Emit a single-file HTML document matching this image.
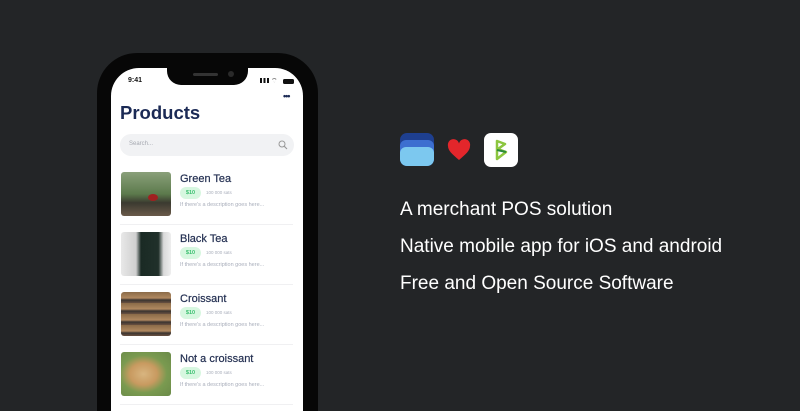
<!DOCTYPE html>
<html><head><style>
*{margin:0;padding:0;box-sizing:border-box}
html,body{width:800px;height:411px;overflow:hidden}
body{background:#232527;position:relative;font-family:"Liberation Sans",sans-serif}
.phone{position:absolute;left:97px;top:53px;width:221px;height:358px;background:#070707;border-radius:40px 40px 0 0}
.screen{position:absolute;left:111px;top:68px;width:192px;height:343px;background:#fff;border-radius:28px 28px 0 0;overflow:hidden}
.notch{position:absolute;left:167px;top:66px;width:81px;height:19px;background:#070707;border-radius:0 0 14px 14px}
.abs{position:absolute}
.title{left:120px;top:102px;font-size:18.5px;font-weight:bold;color:#1b2a55}
.search{left:120px;top:134px;width:174px;height:22px;background:#f1f2f4;border-radius:11px}
.row .img{position:absolute;left:121px;width:50px;height:44px;border-radius:3px}
.name{position:absolute;left:180px;font-size:11px;color:#243052;-webkit-text-stroke:0.2px #243052}
.pill{position:absolute;left:180px;width:21px;height:12px;background:#d7f7e0;border-radius:6px;color:#3cbf70;font-size:5.5px;font-weight:bold;text-align:center;line-height:12px}
.sats{position:absolute;left:206px;font-size:4.5px;color:#a9aebb}
.desc{position:absolute;left:180px;font-size:5.5px;color:#a9aebb}
.div{position:absolute;left:120px;width:173px;height:1px;background:#f0f0f2}
.txt{position:absolute;left:400px;color:#fff;font-size:19px}
</style></head><body>
<div class="phone"></div>
<div class="screen"></div>
<div class="notch"></div>
<div class="abs" style="left:193px;top:73px;width:25px;height:3px;background:#333;border-radius:2px"></div>
<div class="abs" style="left:228px;top:71px;width:6px;height:6px;background:#2a2a2a;border-radius:50%"></div>
<div class="abs" style="left:128px;top:77px;font-size:7px;font-weight:bold;color:#111">9:41</div>
<div class="abs" style="left:260px;top:78px;width:9px;height:5px;background:linear-gradient(90deg,#111 20%,transparent 20%,transparent 40%,#111 40%,#111 60%,transparent 60%,transparent 80%,#111 80%)"></div>
<div class="abs" style="left:271px;top:77px;font-size:7px;color:#111">⌔</div>
<div class="abs" style="left:283px;top:79px;width:11px;height:5px;background:#111;border-radius:1.5px"></div>
<div class="abs" style="left:283px;top:91px;font-size:9px;color:#1b2a55;letter-spacing:-1px;font-weight:bold">•••</div>
<div class="abs title">Products</div>
<div class="abs search"></div>
<div class="abs" style="left:129px;top:141px;font-size:6px;color:#a5a8b0">Search...</div>
<svg class="abs" style="left:278px;top:140px" width="10" height="10" viewBox="0 0 10 10"><circle cx="4" cy="4" r="3" fill="none" stroke="#999" stroke-width="1"/><path d="M6.2 6.2L9 9" stroke="#999" stroke-width="1.1"/></svg>

<div class="row">
<div class="img" style="top:172px;background:linear-gradient(180deg,#8aa07a 0%,#5c7a4c 50%,#3b3a30 70%,#6a5a4a 100%)"></div>
<div class="abs" style="left:148px;top:194px;width:10px;height:7px;background:#a02020;border-radius:50%"></div>
<div class="name" style="top:173px">Green Tea</div>
<div class="pill" style="top:187px">$10</div><div class="sats" style="top:190px">100 000 sats</div>
<div class="desc" style="top:202px">If there's a description goes here...</div>
<div class="div" style="top:224px"></div>

<div class="img" style="top:232px;background:linear-gradient(90deg,#e8e8e8 0%,#cfcfcf 30%,#1a2a24 40%,#20302a 75%,#d9d9d9 85%,#eee 100%)"></div>
<div class="name" style="top:233px">Black Tea</div>
<div class="pill" style="top:247px">$10</div><div class="sats" style="top:250px">100 000 sats</div>
<div class="desc" style="top:262px">If there's a description goes here...</div>
<div class="div" style="top:284px"></div>

<div class="img" style="top:292px;background:repeating-linear-gradient(180deg,#8a6a48 0,#b08860 6px,#3a3430 8px,#6a5040 11px)"></div>
<div class="name" style="top:293px">Croissant</div>
<div class="pill" style="top:307px">$10</div><div class="sats" style="top:310px">100 000 sats</div>
<div class="desc" style="top:322px">If there's a description goes here...</div>
<div class="div" style="top:344px"></div>

<div class="img" style="top:352px;background:radial-gradient(ellipse at 45% 50%,#d8b580 0%,#c89a60 35%,#7a9a50 60%,#6a8a48 100%)"></div>
<div class="name" style="top:353px">Not a croissant</div>
<div class="pill" style="top:367px">$10</div><div class="sats" style="top:370px">100 000 sats</div>
<div class="desc" style="top:382px">If there's a description goes here...</div>
<div class="div" style="top:404px"></div>
</div>

<div class="abs" style="left:400px;top:133px;width:34px;height:33px;border-radius:7px;overflow:hidden;background:#1e3f8f">
<div class="abs" style="left:0;top:7px;width:34px;height:26px;border-radius:6px;background:#3d6fd0"></div>
<div class="abs" style="left:0;top:14px;width:34px;height:19px;border-radius:6px;background:#7cc8ef"></div>
</div>
<svg class="abs" style="left:447px;top:139px" width="24" height="22" viewBox="0 0 24 22"><path d="M12 21C5 15 1 11.5 1 7A5.5 5.5 0 0 1 12 4.5A5.5 5.5 0 0 1 23 7C23 11.5 19 15 12 21Z" fill="#e3262b"/></svg>
<div class="abs" style="left:484px;top:133px;width:34px;height:34px;border-radius:7px;background:#fff">
<svg width="34" height="34" viewBox="0 0 34 34"><path d="M13 8V26L22 19L14 16L21 11Z" fill="none" stroke="#8cc63f" stroke-width="2.5" stroke-linejoin="round"/><path d="M13 17L22 19" stroke="#2a8a3a" stroke-width="2"/></svg>
</div>

<div class="txt" style="top:199px">A merchant POS solution</div>
<div class="txt" style="top:236px">Native mobile app for iOS and android</div>
<div class="txt" style="top:273px">Free and Open Source Software</div>
</body></html>
